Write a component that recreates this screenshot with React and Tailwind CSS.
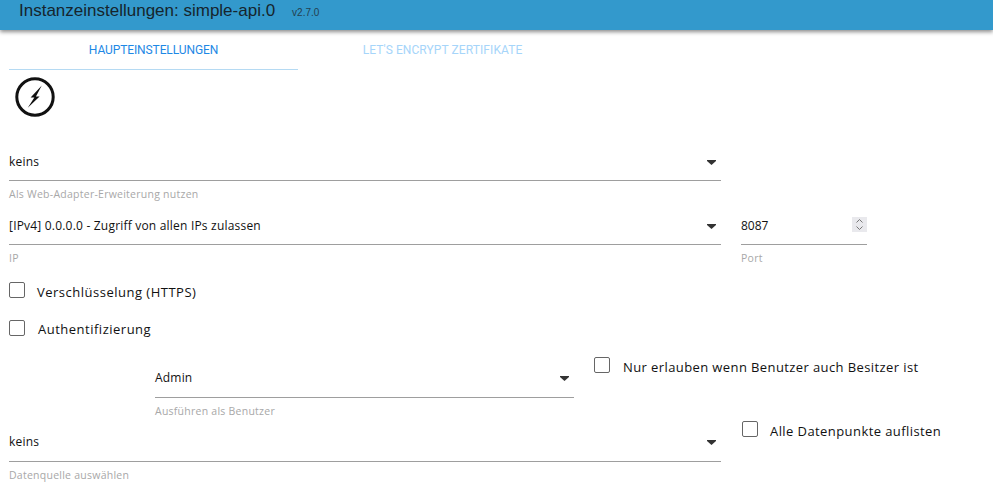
import React from "react";

const body = "font-['Open_Sans','Noto_Sans',sans-serif]";

function Arrow({ className = "" }) {
  return (
    <svg width="9" height="5" viewBox="0 0 9 5" className={className}>
      <path d="M0 0H9V1L4.5 5L0 1Z" fill="#333" />
    </svg>
  );
}

function Select({ value, label, className = "", pad = "pb-[2px]" }) {
  return (
    <div className={`${className} shrink-0`}>
      <div className={`h-[37px] border-b border-[#9e9e9e] flex items-center justify-between pr-[5px] ${pad}`}>
        <span className="text-[12px] leading-[16px] text-[#111] tracking-[0.2px]">{value}</span>
        <Arrow />
      </div>
      <div className="mt-[6px] text-[10.5px] leading-[14px] text-[#a8a8a8] tracking-[0.25px]">{label}</div>
    </div>
  );
}

function Check({ label, gap = "gap-[12px]", className = "", text = "mt-[1px]", track = "tracking-[0.5px]" }) {
  return (
    <div className={`flex items-start ${gap} ${className}`}>
      <span className="w-[16px] h-[16px] rounded-[2px] border border-[#666] bg-white shrink-0" />
      <span className={`text-[13px] leading-[18px] text-[#111] whitespace-nowrap ${text} ${track}`}>{label}</span>
    </div>
  );
}

export default function App() {
  return (
    <div className={`w-[993px] h-[497px] overflow-hidden bg-white ${body}`}>
      <header className="h-[30px] bg-[#3399cc] shadow-[0_2px_4px_rgba(0,0,0,0.45)] flex items-start pl-[19px] font-['Liberation_Sans',sans-serif] relative">
        <span className="text-[17px] leading-[22px] text-[#16252d]">Instanzeinstellungen: simple-api.0</span>
        <span className="text-[10px] leading-[12px] text-[#24404f] ml-[17px] mt-[7px]">v2.7.0</span>
      </header>

      <div className="pl-[9px]">
        <nav className="flex h-[40px] text-[12px] font-['Roboto',sans-serif]">
          <div className="w-[289px] border-b border-[#b5daf3] flex items-center justify-center text-[#1e88e5] tracking-[-0.1px]">HAUPTEINSTELLUNGEN</div>
          <div className="w-[289px] flex items-center justify-center text-[#a6d5fa] tracking-[0.08px]">LET'S ENCRYPT ZERTIFIKATE</div>
        </nav>

        <svg width="40" height="40" viewBox="0 0 40 40" className="ml-[6px] mt-[7px] block">
          <circle cx="20" cy="20" r="18.2" fill="none" stroke="#111" strokeWidth="3" />
          <path d="M26.8 8.6L15.6 20.4H20.4ZM12.8 30.8L24.6 19.4H20Z" fill="#111" />
        </svg>

        <Select value="keins" label="Als Web-Adapter-Erweiterung nutzen" className="w-[712px] mt-[27px]" pad="" />

        <div className="flex gap-[20px] mt-[7px]">
          <Select value="[IPv4] 0.0.0.0 - Zugriff von allen IPs zulassen" label="IP" className="w-[712px]" pad="" />
          <div className="w-[126px] shrink-0">
            <div className="h-[37px] border-b border-[#9e9e9e] flex items-center justify-between">
              <span className="text-[12px] leading-[16px] text-[#111]">8087</span>
              <span className="w-[15px] h-[15px] bg-[#e9e9ed] flex items-center justify-center mb-[3px]">
                <svg width="9" height="13" viewBox="0 0 9 13">
                  <path d="M1.5 4.5L4.5 1.5L7.5 4.5M1.5 8.5L4.5 11.5L7.5 8.5" fill="none" stroke="#777" strokeWidth="1" />
                </svg>
              </span>
            </div>
            <div className="mt-[6px] text-[10.5px] leading-[14px] text-[#a8a8a8] tracking-[0.25px]">Port</div>
          </div>
        </div>

        <Check label="Verschlüsselung (HTTPS)" className="mt-[17px]" />
        <Check label="Authentifizierung" gap="gap-[13px]" className="mt-[19px]" text="" />

        <div className="flex items-start mt-[19px]">
          <Select value="Admin" label="Ausführen als Benutzer" className="w-[419px] ml-[146px] mt-[4px]" />
          <Check label="Nur erlauben wenn Benutzer auch Besitzer ist" gap="gap-[13px]" className="ml-[20px]" track="tracking-[0.4px]" />
        </div>

        <div className="flex items-start mt-[3px]">
          <Select value="keins" label="Datenquelle auswählen" className="w-[712px] mt-[4px]" />
          <Check label="Alle Datenpunkte auflisten" className="ml-[21px]" track="tracking-[0.42px]" />
        </div>
      </div>
    </div>
  );
}
